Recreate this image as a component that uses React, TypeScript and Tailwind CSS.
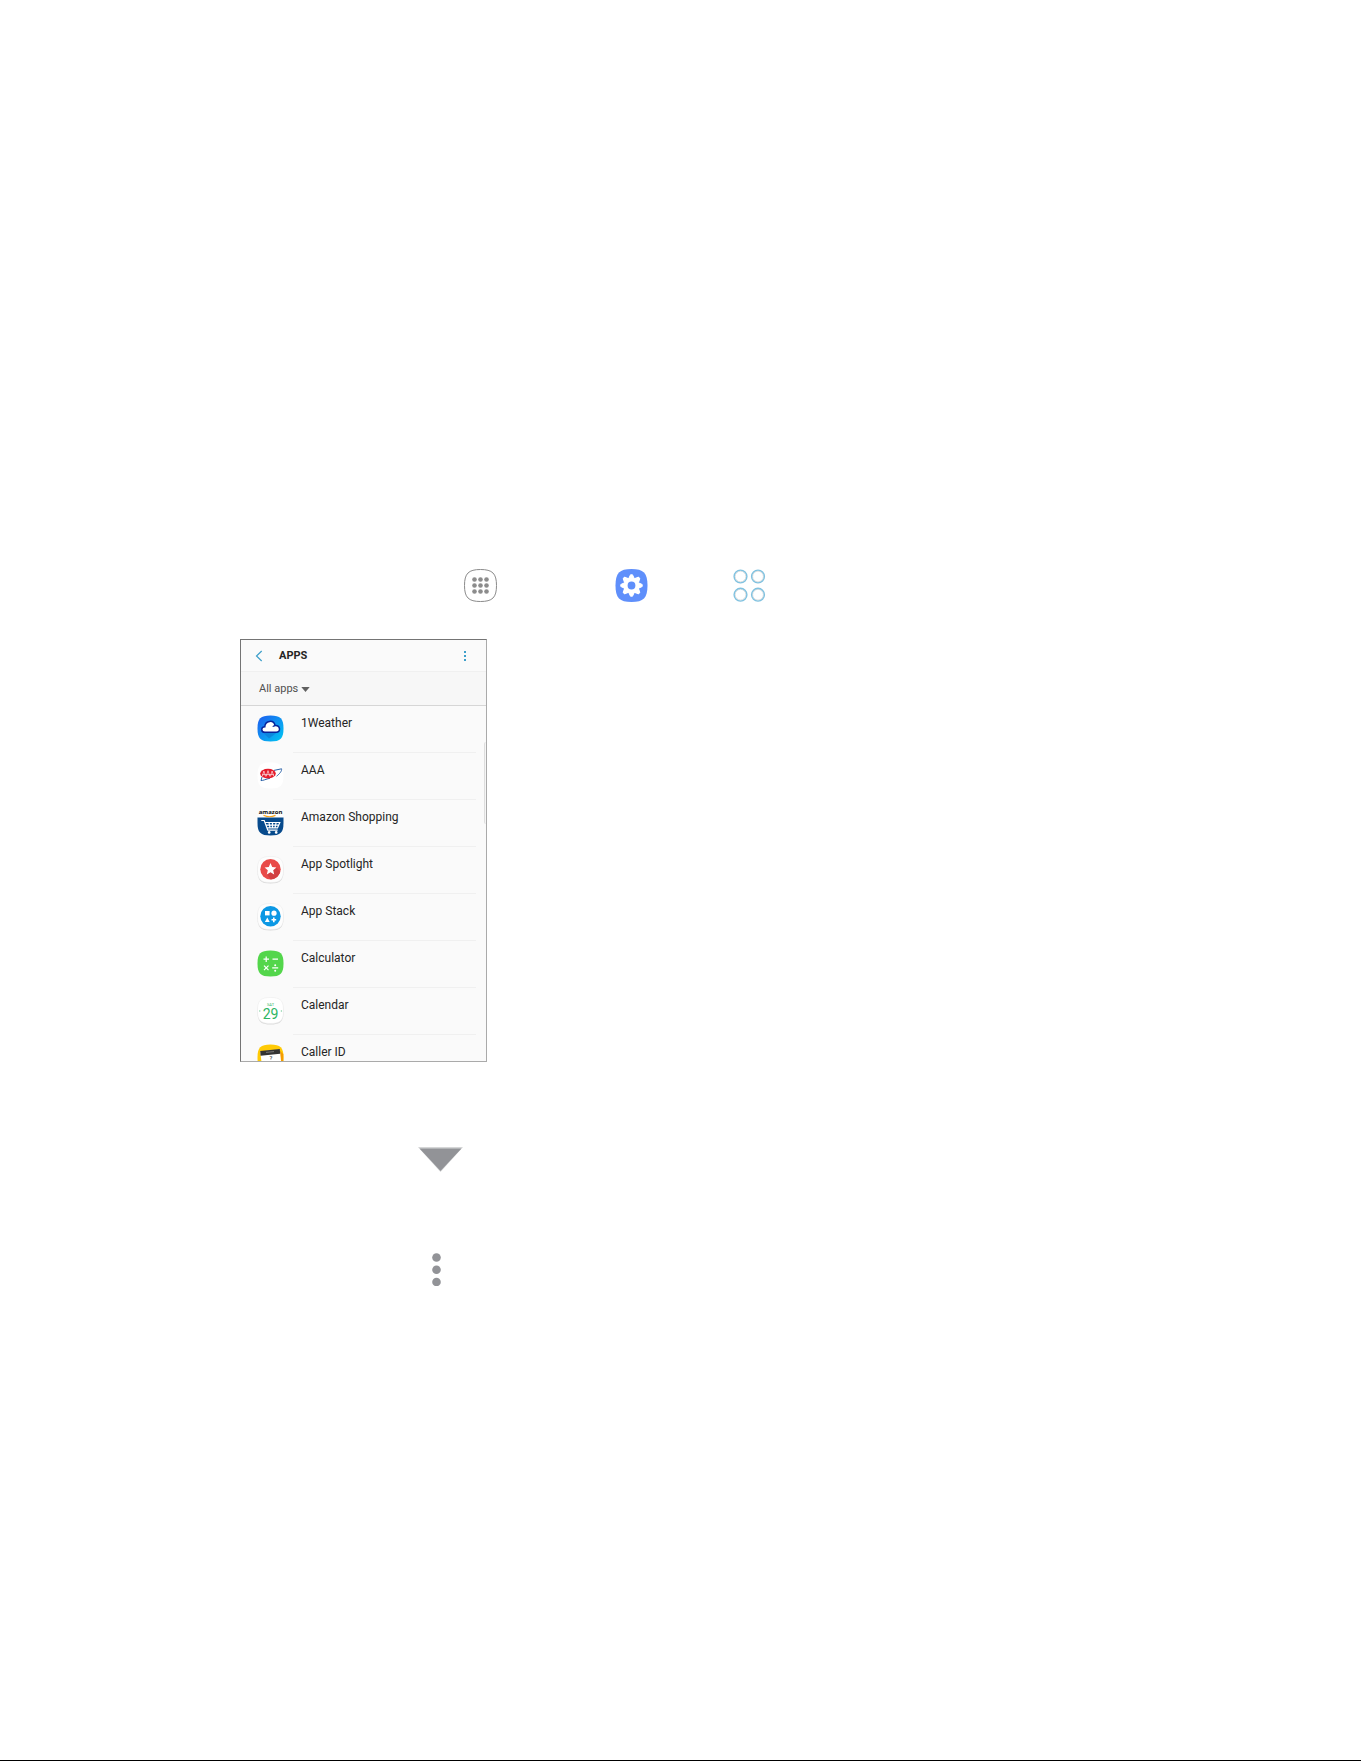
import type { ReactNode } from "react"

type AppEntry = {
  name: string
  icon: ReactNode
}

const TILE = "M13.5 0.5C23.5 0.5 26.5 3.5 26.5 13.5C26.5 23.5 23.5 26.5 13.5 26.5C3.5 26.5 0.5 23.5 0.5 13.5C0.5 3.5 3.5 0.5 13.5 0.5Z"

function Tile({ fill, shadow, children }: { fill: string; shadow?: boolean; children: ReactNode }) {
  return (
    <svg className="size-[27px] shrink-0 overflow-visible" viewBox="0 0 27 27" aria-hidden="true">
      {shadow && <path d={TILE} fill="#d9d9d9" transform="translate(0 1)" />}
      <path d={TILE} fill={fill} stroke={shadow ? "#ececec" : "none"} strokeWidth="0.6" />
      {children}
    </svg>
  )
}

function WeatherIcon() {
  return (
    <Tile fill="url(#weather)">
      <defs>
        <linearGradient id="weather" x1="0" y1="0" x2="1" y2="1">
          <stop offset="0.15" stopColor="#1a6cf0" />
          <stop offset="0.9" stopColor="#02bdf2" />
        </linearGradient>
      </defs>
      <path d="M5 16.5L12 23.5L20 17.5Z" fill="#0c78d0" opacity="0.6" />
      <path
        d="M7.8 17.3C3.8 17.3 3.7 12 7.8 11.8C8 5.2 17 4.4 18 10.6C23.6 10.2 24 17.3 19.2 17.3Z"
        fill="#fff"
        stroke="#07259b"
        strokeWidth="1.5"
      />
      <path d="M15.8 11.8C16.3 11 17 10.7 18 10.6" fill="none" stroke="#07259b" strokeWidth="1.2" />
    </Tile>
  )
}

function AaaIcon() {
  return (
    <Tile fill="#ffffff">
      <path d="M17 8.4L24.6 6.8C25 9 22.6 11.8 19.6 14.2M5 15L4 18.6C6 18.6 9 17.2 13 16.2" fill="none" stroke="#2d63a8" strokeWidth="1" />
      <ellipse cx="11" cy="11.6" rx="7.8" ry="4.9" fill="#e51b2b" />
      <path d="M5.2 14.4L6.9 9L8.6 14.4M9.2 14.4L11 8.6L12.8 14.4M13.4 14.4L15.1 9L16.8 14.4M5.2 12.6H16.8" fill="none" stroke="#fff" strokeWidth="0.6" />
    </Tile>
  )
}

function AmazonIcon() {
  return (
    <Tile fill="#ffffff">
      <path d="M0.5 8.5H26.5V14C26.5 23.5 23.5 26.5 13.5 26.5C3.5 26.5 0.5 23.5 0.5 14Z" fill="#074a8c" />
      <text x="13.5" y="5" textAnchor="middle" fontFamily="Open Sans, sans-serif" fontSize="6" fontWeight="700" fill="#111">
        amazon
      </text>
      <path d="M6.5 6.2C10 8 15 8 18.5 6.4" fill="none" stroke="#f9a51a" strokeWidth="1.2" />
      <path d="M4.3 11.5H7.2L10.8 21.2H20.6M8.2 13.5H22.8L20.5 18.9H10.2M9.2 16.1H21.6M12 13.5L13 18.9M15.5 13.5V18.9M19.1 13.5L18 18.9" fill="none" stroke="#fff" strokeWidth="1.2" />
      <circle cx="12.2" cy="23.4" r="1.3" fill="#fff" />
      <circle cx="19.2" cy="23.4" r="1.3" fill="#fff" />
    </Tile>
  )
}

function SpotlightIcon() {
  return (
    <Tile fill="#fdfdfd" shadow>
      <circle cx="13.5" cy="13.2" r="10.2" fill="#e94b49" />
      <path d="M19.4 11.4L23.2 15.6C21.8 20.4 18 23.2 13.8 23.4L9.8 18.4Z" fill="#d24042" />
      <path d="M13.5 7L15.2 11L19.4 11.4L16.2 14.2L17.2 18.4L13.5 16.2L9.8 18.4L10.8 14.2L7.6 11.4L11.8 11Z" fill="#fff" />
    </Tile>
  )
}

function StackIcon() {
  return (
    <Tile fill="#fdfdfd" shadow>
      <circle cx="13.5" cy="13.2" r="10.2" fill="#0c98e4" />
      <rect x="8" y="8" width="4.6" height="4.4" fill="#fff" />
      <circle cx="17" cy="10.2" r="2.6" fill="#fff" />
      <path d="M10.3 14.6L12.7 19H7.9ZM16 14.6H17.6V16.1H19.2V17.6H17.6V19.2H16V17.6H14.5V16.1H16Z" fill="#fff" />
    </Tile>
  )
}

function CalculatorIcon() {
  return (
    <Tile fill="#53d64b">
      <path d="M6.5 9.2H12M9.2 6.5V12M15.5 9.2H21M7 15.6L11.5 20.1M11.5 15.6L7 20.1M15.2 17.9H21.2" stroke="#fff" strokeWidth="1.2" />
      <circle cx="18.2" cy="15.2" r="1" fill="#fff" />
      <circle cx="18.2" cy="20.7" r="1" fill="#fff" />
    </Tile>
  )
}

function CalendarIcon() {
  return (
    <Tile fill="#ffffff" shadow>
      <text x="13.5" y="8.8" textAnchor="middle" fontFamily="Roboto, sans-serif" fontSize="4" fill="#32b566">
        SAT
      </text>
      <text x="13.5" y="22" textAnchor="middle" fontFamily="Roboto, sans-serif" fontSize="14" fill="#2db563">
        29
      </text>
      <circle cx="2.8" cy="14" r="0.7" fill="#7fd0a0" />
      <circle cx="24.4" cy="14" r="0.7" fill="#7fd0a0" />
    </Tile>
  )
}

function CallerIdIcon() {
  return (
    <Tile fill="#ffca05">
      <path d="M22 6L26.3 10V19L23 24Z" fill="#f59c00" />
      <path d="M3.2 7.5L22.8 5.5L24.4 20L5 22Z" fill="#fff" />
      <path d="M3.2 7L22.8 5L23.2 9.8L3.6 11.8Z" fill="#333" />
      <path d="M9 8.4L17 7.6" stroke="#8a8a8a" strokeWidth="0.8" />
      <text x="14" y="16" textAnchor="middle" fontFamily="Roboto, sans-serif" fontSize="6" fill="#222">
        ?
      </text>
    </Tile>
  )
}

const apps: AppEntry[] = [
  { name: "1Weather", icon: <WeatherIcon /> },
  { name: "AAA", icon: <AaaIcon /> },
  { name: "Amazon Shopping", icon: <AmazonIcon /> },
  { name: "App Spotlight", icon: <SpotlightIcon /> },
  { name: "App Stack", icon: <StackIcon /> },
  { name: "Calculator", icon: <CalculatorIcon /> },
  { name: "Calendar", icon: <CalendarIcon /> },
  { name: "Caller ID", icon: <CallerIdIcon /> },
]

function AppsGridIcon() {
  const steps = [10.5, 16.5, 22.5]
  return (
    <svg className="size-[33px]" viewBox="0 0 33 33" aria-hidden="true">
      <path
        d="M16.5 0.5C28.5 0.5 32.5 4.5 32.5 16.5C32.5 28.5 28.5 32.5 16.5 32.5C4.5 32.5 0.5 28.5 0.5 16.5C0.5 4.5 4.5 0.5 16.5 0.5Z"
        fill="#fff"
        stroke="#8a8a8a"
      />
      {steps.map((y) => steps.map((x) => <circle key={`${x}-${y}`} cx={x} cy={y} r="2.3" fill="#8c8c8c" />))}
    </svg>
  )
}

function SettingsIcon() {
  return (
    <svg className="size-[33px]" viewBox="0 0 33 33" aria-hidden="true">
      <path d="M16.5 0C28.5 0 32.5 4 32.5 16.5C32.5 29 28.5 33 16.5 33C4.5 33 0.5 29 0.5 16.5C0.5 4 4.5 0 16.5 0Z" fill="#5f8ffb" />
      {[0, 45, 90, 135, 180, 225, 270, 315].map((angle) => (
        <path key={angle} d="M14 9L15.5 5.8H17.5L19 9Z" fill="#fff" stroke="#fff" strokeLinejoin="round" transform={`rotate(${angle} 16.5 16.5)`} />
      ))}
      <circle cx="16.5" cy="16.5" r="6" fill="none" stroke="#fff" strokeWidth="4.2" />
    </svg>
  )
}

function ApplicationsIcon() {
  return (
    <svg className="size-[33px]" viewBox="0 0 33 33" fill="none" strokeWidth="1.4" aria-hidden="true">
      {[7.5, 25.7].map((cy) =>
        [7.5, 25].map((cx) => (
          <g key={`${cx}-${cy}`}>
            <circle cx={cx} cy={cy} r="5.4" stroke="#dcdcdc" strokeWidth="1" />
            <circle cx={cx} cy={cy} r="6.4" stroke="#80c2e0" />
          </g>
        ))
      )}
    </svg>
  )
}

function AppsScreen() {
  return (
    <section className="h-[423px] w-[247px] overflow-hidden border border-t-[#747474] border-r-[#aaaaaa] border-b-[#aaaaaa] border-l-[#747474] bg-[#fafafa] font-['Roboto',sans-serif] text-[#252525]">
      <header className="flex h-8 items-center border-b border-[#f0f0f0] pt-px pr-[15px] pl-[14px]">
        <button type="button" aria-label="Back" className="flex w-6 items-center">
          <svg className="h-3 w-2" viewBox="0 0 8 12" fill="none" stroke="#3d9fca" strokeWidth="1.2" aria-hidden="true">
            <path d="M6.7 1L1.5 6L6.7 11" />
          </svg>
        </button>
        <h1 className="text-[11px] leading-4 font-bold">APPS</h1>
        <button type="button" aria-label="More options" className="ml-auto flex w-3 justify-center">
          <svg className="h-3 w-1" viewBox="0 0 4 12" fill="#3d9fca" aria-hidden="true">
            <rect x="1" y="1" width="2" height="2" />
            <rect x="1" y="5" width="2" height="2" />
            <rect x="1" y="9" width="2" height="2" />
          </svg>
        </button>
      </header>

      <div className="flex h-[34px] items-center border-b border-[#d6d6d6] bg-[#f7f7f7] pt-px pl-[18px]">
        <button type="button" className="flex items-center gap-[3px] text-[11px] leading-4 text-[#505050]">
          All apps
          <svg className="h-[5px] w-[9px]" viewBox="0 0 9 5" fill="#606060" aria-hidden="true">
            <path d="M0.3 0H8.7L4.5 5Z" />
          </svg>
        </button>
      </div>

      <div className="relative">
        <ul>
          {apps.map((app) => (
            <li key={app.name} className="flex h-[47px] pl-4">
              <div className="w-9 pt-[9px]">{app.icon}</div>
              <div className="mr-[10px] flex-1 border-b border-[#f0f0f0] pt-[9px] pl-2 text-xs">{app.name}</div>
            </li>
          ))}
        </ul>
        <div className="absolute top-9 right-0 h-[82px] w-[2px] rounded-l border-l border-[#dedede] bg-[#f5f5f5]" />
      </div>
    </section>
  )
}

export default function App() {
  return (
    <div className="flex min-h-screen flex-col border-b border-black bg-white">
      <main className="pt-[569px] pl-60">
        <div className="flex pl-56">
          <AppsGridIcon />
          <div className="pl-[118px]">
            <SettingsIcon />
          </div>
          <div className="pl-[85px]">
            <ApplicationsIcon />
          </div>
        </div>

        <div className="pt-[37px]">
          <AppsScreen />
        </div>

        <svg className="mt-[85px] ml-[178px] h-[25px] w-[45px]" viewBox="0 0 45 25" aria-hidden="true">
          <path d="M0 0H45L22.5 25Z" fill="#d5d6d7" />
          <path d="M1.5 1.4H43.5L22.5 24Z" fill="#929397" />
        </svg>

        <svg className="mt-[81px] ml-48 h-[33px] w-[9px]" viewBox="0 0 9 33" fill="#929397" aria-hidden="true">
          <circle cx="4.5" cy="4.5" r="4.3" />
          <circle cx="4.5" cy="16.8" r="4.3" />
          <circle cx="4.5" cy="29" r="4.3" />
        </svg>
      </main>
    </div>
  )
}
